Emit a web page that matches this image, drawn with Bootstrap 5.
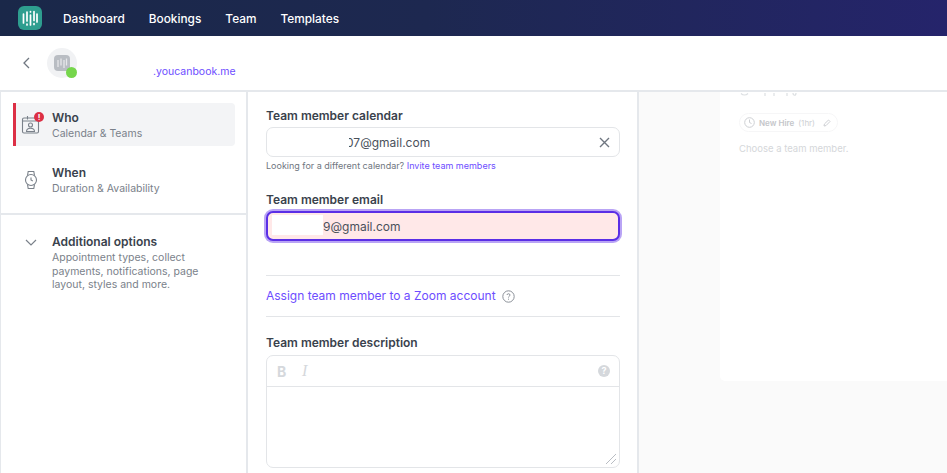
<!DOCTYPE html>
<html lang="en">
<head>
    <meta charset="UTF-8">
    <title>Team member</title>
    <link href="https://cdn.jsdelivr.net/npm/bootstrap@5.3.3/dist/css/bootstrap.min.css" rel="stylesheet">
    <style>
        html, body { height: 100%; overflow: hidden; }
        body { font-family: Inter, "Liberation Sans", sans-serif; font-size: 12px; color: #3a424d; background: #fff; }
        .topbar { height: 36px; background: linear-gradient(90deg, #1a2849 0%, #1d2850 45%, #25246b 100%); padding-left: 18px; gap: 24px; }
        .topbar .applogo { width: 24px; height: 24px; margin-right: -3px; }
        .topbar a { color: #fff; font-size: 11.85px; font-weight: 500; text-decoration: none; margin-top: 3px; }
        .topbar .applogo { margin-top: 0; }
        .subbar { height: 56px; border-bottom: 2px solid #e5e8ec; padding-left: 21px; }
        .subbar .backico { width: 12px; height: 14px; margin-right: 14px; }
        .avatar-wrap { width: 30px; height: 30px; border-radius: 50%; background: #f1f2f4; position: relative; }
        .avatar-dot { position: absolute; right: 0; bottom: 0; width: 11px; height: 11px; border-radius: 50%; background: #76d64c; }
        .domain { color: #6d4dff; font-size: 10.5px; margin-left: 76px; margin-top: 18px; }
        .workarea { height: 381px; }
        .sidebar { width: 248px; flex: none; border-left: 1px solid #e5e8ec; border-right: 2px solid #e5e8ec; padding-top: 11px; }
        .sideitem { height: 43px; margin-left: 12px; margin-right: 11px; border-radius: 4px; padding-left: 39px; padding-top: 7px; position: relative; margin-bottom: 12px; }
        .sideitem.current { background: #f3f4f6; border-left: 3px solid #dc2f45; border-radius: 0 4px 4px 0; padding-left: 36px; }
        .sideitem .sideico { position: absolute; left: 9px; top: 12px; }
        .sideitem.current .sideico { left: 5px; }
        .sidetitle { font-size: 12px; font-weight: 600; line-height: 15px; color: #3a424d; }
        .sidesub { font-size: 10.5px; color: #7a818a; line-height: 15px; margin-top: 1px; }
        .alertdot { position: absolute; left: 18px; top: 9px; width: 10px; height: 10px; border-radius: 50%; background: #dc2f45; color: #fff; font-size: 8px; font-weight: 700; line-height: 10px; text-align: center; }
        .sidesep { border-top: 2px solid #e5e8ec; margin-top: 10px; }
        .sidemore { padding: 19px 30px 0 51px; position: relative; }
        .sidemore svg { position: absolute; left: 24px; top: 24px; }
        .sidemore .sidesub { line-height: 13.5px; margin-top: 2px; }
        .mainform { width: 391px; flex: none; border-right: 2px solid #e5e8ec; padding: 16px 17px 0 18px; }
        .fieldlabel { font-size: 12px; font-weight: 600; line-height: 16px; color: #3a424d; margin-bottom: 3px; }
        .fakeinput { height: 30px; border: 1px solid #e3e5e8; border-radius: 7px; font-size: 12px; color: #4a515b; padding-left: 79px; line-height: 30px; position: relative; }
        .fakeinput svg { position: absolute; right: 9px; top: 9px; }
        .hintline { font-size: 9px; color: #6f7680; margin-top: 2px; line-height: 13px; }
        .hintline a, .zoomlink { color: #6d4dff; text-decoration: none; }
        .coverbox { position: absolute; left: 75px; top: 2px; width: 7px; height: 24px; background: #fff; }
        .badinput { height: 30px; border: 2px solid #5a2ee6; border-radius: 7px; background: #ffe8e8; box-shadow: 0 0 0 2px #b9a4f5; font-size: 12px; color: #4a515b; line-height: 28px; padding-left: 55px; margin-top: 3px; position: relative; }
        .maskbox { position: absolute; left: 4px; top: 2px; width: 51px; height: 20px; background: #fff; }
        .rule { border-top: 1px solid #e3e5e8; }
        .zoomrow { height: 40px; font-size: 12px; gap: 6px; }
        .editor { height: 113px; border: 1px solid #e3e5e8; border-radius: 7px; position: relative; }
        .edtools { height: 31px; border-bottom: 1px solid #e3e5e8; padding: 0 9px 0 10px; color: #d5d8dc; font-size: 14px; }
        .edtools b { font-weight: 700; width: 25px; }
        .edtools i { font-family: "Liberation Serif", serif; font-size: 16px; }
        .qmark { width: 12px; height: 12px; border-radius: 50%; background: #d5d8dc; color: #fff; font-size: 9px; font-weight: 700; line-height: 12px; text-align: center; }
        .gripper { position: absolute; right: 2px; bottom: 2px; }
        .previewpane { background: #fafafa; padding-left: 81px; }
        .previewcard { background: #fff; height: 289px; border-radius: 0 0 0 5px; padding: 0 0 0 19px; overflow: hidden; }
        .ghostmarks { height: 5px; }
        .hirechip { display: inline-flex; align-items: center; gap: 4px; margin-top: 16px; height: 19px; padding: 0 6px 0 4px; border: 1px solid #f6f6f7; border-radius: 10px; font-size: 8px; color: #cdcfd3; }
        .hirechip b { color: #c4c6ca; font-weight: 600; }
        .choosetxt { font-size: 9.5px; color: #d5d7da; margin-top: 9px; line-height: 13px; }
    </style>
</head>
<body>
    <nav class="topbar d-flex align-items-center">
        <svg class="applogo" viewBox="0 0 24 24">
            <rect width="24" height="24" rx="6" fill="#2e9e8f"/>
            <g stroke="#fff" stroke-width="1.7" stroke-linecap="round">
                <path d="M5.500 8v9M9 6v9M9 18v1M12.500 9v10M12.500 5.500v.5M16 5.500v9M16 17.500v1M19 8v8"/>
            </g>
        </svg>
        <a href="#">Dashboard</a>
        <a href="#">Bookings</a>
        <a href="#">Team</a>
        <a href="#">Templates</a>
    </nav>

    <div class="subbar d-flex align-items-center">
        <svg class="backico" viewBox="0 0 12 14"><path d="M8 2 3 7l5 5" fill="none" stroke="#6f7680" stroke-width="1.3"/></svg>
        <div class="avatar-wrap d-flex align-items-center justify-content-center">
            <svg width="16" height="16" viewBox="0 0 16 16">
                <rect width="16" height="16" rx="4" fill="#b9bdc3"/>
                <path d="M4 5v7M7 3.500v7M10 5v8M12.500 3.500v7" stroke="#e6e7ea" stroke-width="1.300"/>
            </svg>
            <span class="avatar-dot"></span>
        </div>
        <div class="domain">.youcanbook.me</div>
    </div>

    <div class="workarea d-flex">
        <aside class="sidebar">
            <div class="sideitem current">
                <svg class="sideico" width="19" height="19" viewBox="0 0 19 19" fill="none" stroke="#7a818a" stroke-width="1.100">
                    <rect x="1.500" y="3" width="16" height="15" rx="1.500"/>
                    <path d="M1.500 6h16M6.500 1v3.500"/>
                    <circle cx="9.500" cy="10" r="2"/>
                    <path d="M5.500 16.500c0-2.500 1.800-3.300 4-3.300s4 .8 4 3.300z"/>
                </svg>
                <span class="alertdot">!</span>
                <div class="sidetitle">Who</div>
                <div class="sidesub">Calendar &amp; Teams</div>
            </div>
            <div class="sideitem">
                <svg class="sideico" width="18" height="20" viewBox="0 0 18 20" fill="none" stroke="#7a818a" stroke-width="1.100">
                    <circle cx="9" cy="10" r="5.500"/>
                    <path d="M5.500 5.500 6.200 1.500h5.600l.7 4M5.500 14.500l.7 4h5.600l.7-4M9 7.500V10l1.800 1"/>
                </svg>
                <div class="sidetitle">When</div>
                <div class="sidesub">Duration &amp; Availability</div>
            </div>
            <div class="sidesep"></div>
            <div class="sidemore">
                <svg width="12" height="7" viewBox="0 0 12 7"><path d="M1 1l5 5 5-5" fill="none" stroke="#7a818a" stroke-width="1.200"/></svg>
                <div class="sidetitle">Additional options</div>
                <div class="sidesub">Appointment types, collect payments, notifications, page layout, styles and more.</div>
            </div>
        </aside>

        <main class="mainform">
            <div class="fieldlabel">Team member calendar</div>
            <div class="fakeinput">
                07@gmail.com
                <span class="coverbox"></span>
                <svg width="11" height="11" viewBox="0 0 11 11"><path d="M1 1l9 9M10 1l-9 9" stroke="#6f7680" stroke-width="1.400"/></svg>
            </div>
            <div class="hintline">Looking for a different calendar? <a href="#">Invite team members</a></div>
            <div class="fieldlabel mb-0" style="margin-top:20px">Team member email</div>
            <div class="badinput"><span class="maskbox"></span>9@gmail.com</div>
            <div class="rule" style="margin-top:34px"></div>
            <div class="zoomrow d-flex align-items-center">
                <a class="zoomlink" href="#">Assign team member to a Zoom account</a>
                <svg width="13" height="13" viewBox="0 0 13 13" fill="none" stroke="#8b9098"><circle cx="6.500" cy="6.500" r="5.700"/><path d="M5 5C5 3.300 8 3.300 8 5 8 6.300 6.500 6.100 6.500 7.500M6.500 8.700v1"/></svg>
            </div>
            <div class="rule"></div>
            <div class="fieldlabel" style="margin-top:18px;margin-bottom:4px">Team member description</div>
            <div class="editor">
                <div class="edtools d-flex align-items-center">
                    <b>B</b><i>I</i>
                    <span class="qmark ms-auto">?</span>
                </div>
                <svg class="gripper" width="12" height="12" viewBox="0 0 12 12"><path d="M1 11 11 1M6 11l5-5" stroke="#b9bdc3"/></svg>
            </div>
        </main>

        <section class="previewpane flex-grow-1">
            <div class="previewcard">
                <svg class="ghostmarks d-block" width="80" height="5" viewBox="0 0 80 5" fill="none" stroke="#dcdfe2" stroke-width="1.200">
                    <path d="M2 1.500c2 2 5 2 7 0M26 1v3M35 1v3M48 1v3M54 1c0 3 3 3 3 0"/>
                </svg>
                <div class="hirechip">
                    <svg width="11" height="11" viewBox="0 0 11 11" fill="none" stroke="#cdcfd3"><circle cx="5.500" cy="5.500" r="4.800"/><path d="M5.500 2.500v3l2 1"/></svg>
                    <b>New Hire</b> (1hr)
                    <svg class="ms-1" width="8" height="8" viewBox="0 0 8 8" fill="none" stroke="#cdcfd3"><path d="M1 7l.4-2L5.500 1 7 2.500 3 6.600z"/></svg>
                </div>
                <div class="choosetxt">Choose a team member.</div>
            </div>
        </section>
    </div>

    <script src="https://cdn.jsdelivr.net/npm/bootstrap@5.3.3/dist/js/bootstrap.bundle.min.js"></script>
</body>
</html>
